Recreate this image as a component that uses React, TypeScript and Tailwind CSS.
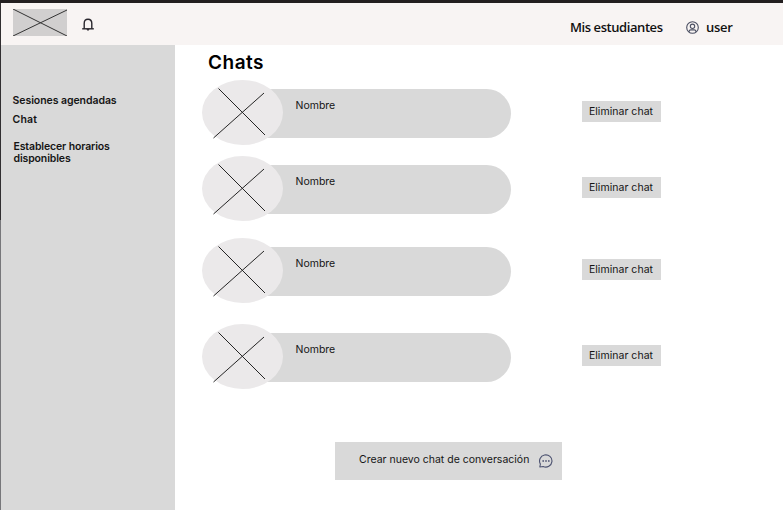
import React from "react";

function UserIcon() {
  return (
    <svg className="h-[13px] w-[13px]" viewBox="0 0 13 13" fill="none" stroke="#4b4f62" strokeWidth="1.1">
      <circle cx="6.5" cy="6.5" r="5.8" />
      <circle cx="6.5" cy="5.3" r="2.2" />
      <path d="M3 10.9V10.3Q3.2 8.9 4.8 8.9H8.2Q9.8 8.9 10 10.3V10.9" />
    </svg>
  );
}

function BellIcon() {
  return (
    <svg className="h-[14px] w-[12px]" viewBox="0 0 12 14" fill="none" stroke="#29262d" strokeWidth="1.4">
      <path d="M2.2 10.7V5.4Q2.2 1.2 6 1.2T9.8 5.4V10.7" />
      <path d="M.2 10.8H11.8" />
      <path d="M4.8 11.4Q6 13.2 7.2 11.4Z" fill="#29262d" strokeWidth="0.8" />
    </svg>
  );
}

function ChatIcon() {
  return (
    <svg className="h-[14px] w-[14px]" viewBox="0 0 14 14" fill="none" stroke="#4c5270" strokeWidth="1.1">
      <path d="M.8 13L1.4 10A6.2 6.1 0 1 1 4.2 12.5Z" strokeLinejoin="round" />
      <path d="M3.4 7H5M6.2 7H7.8M9 7H10.6" strokeWidth="1.4" />
    </svg>
  );
}

function ChatRow({ className }: { className: string }) {
  return (
    <div className={`flex h-[65px] items-center ${className}`}>
      <div className="relative z-10 h-[65px] w-[81px] shrink-0 rounded-[50%] bg-[#ebe9ea]">
        <svg className="h-[65px] w-[81px]" viewBox="0 0 81 65" stroke="#252525" strokeWidth="1">
          <path d="M16.5 8.5L63 55M11.5 58L62 13" />
        </svg>
      </div>
      <div className="-ml-[41px] mt-[2px] h-[49px] w-[269.5px] shrink-0 rounded-r-full bg-[#d9d9d9] pl-[54px] pt-[9px] text-[10.5px] leading-[15px]">
        Nombre
      </div>
      <button className="ml-[70.5px] -mt-[2px] h-[21px] w-[79px] shrink-0 whitespace-nowrap bg-[#d9d9d9] text-[10.5px] leading-[21px] tracking-[0.03px]">
        Eliminar chat
      </button>
    </div>
  );
}

export default function App() {
  return (
    <div className="flex h-[510px] w-[783px] flex-col overflow-hidden bg-white font-[Inter,sans-serif] text-[#151515]">
      <div className="h-[3px] shrink-0 bg-[#231f20]" />
      <div className="flex min-h-0 flex-1">
        <div className="w-px shrink-0 bg-[#77777a]">
          <div className="h-[217px] bg-[#302e30]" />
        </div>
        <div className="flex min-w-0 flex-1 flex-col">
          <header className="flex h-[42px] shrink-0 items-center bg-[#f8f4f3] pl-3 font-['Open_Sans','Noto_Sans',sans-serif] text-[13px] font-semibold text-[#111]">
            <svg className="-mt-[4px] h-[27px] w-[54px] bg-[#d1cfcf]" viewBox="0 0 54 27" stroke="#333" strokeWidth="1">
              <path d="M0 0L54 27M0 27L54 1" />
            </svg>
            <div className="ml-[15px] mt-[2px]"><BellIcon /></div>
            <div className="ml-[476px] mt-[5px] w-[94px] whitespace-nowrap leading-5 tracking-[-0.43px]">Mis estudiantes</div>
            <div className="ml-[22px] mt-[6px]"><UserIcon /></div>
            <div className="ml-[7px] mt-[5px] leading-5 tracking-[-0.3px]">user</div>
          </header>
          <div className="flex min-h-0 flex-1">
            <aside className="w-[173.5px] shrink-0 bg-[#d9d9d9] pl-[11.5px] pt-[50px] text-[10.5px] font-semibold leading-[12px] tracking-[-0.06px]">
              <div>Sesiones agendadas</div>
              <div className="mt-[7px] tracking-[0.2px]">Chat</div>
              <div className="ml-px mt-[15px] tracking-[-0.13px]">Establecer horarios<br />disponibles</div>
            </aside>
            <main className="flex min-w-0 flex-1 flex-col pl-[27px]">
              <h1 className="ml-[6.5px] mt-[6px] h-[24px] text-[19px] font-semibold leading-[24px] tracking-[0.5px] text-black">Chats</h1>
              <ChatRow className="mt-[5px]" />
              <ChatRow className="mt-[11px]" />
              <ChatRow className="mt-[17px]" />
              <ChatRow className="mt-[20.5px]" />
              <button className="ml-[133.5px] mt-[53px] flex h-[38px] w-[227px] items-center bg-[#d9d9d9] pb-px pl-[24px] text-[10.5px]">
                <span className="w-[170px] whitespace-nowrap text-left">Crear nuevo chat de conversación</span>
                <span className="ml-[10px] mt-[2px]"><ChatIcon /></span>
              </button>
            </main>
          </div>
        </div>
      </div>
    </div>
  );
}
